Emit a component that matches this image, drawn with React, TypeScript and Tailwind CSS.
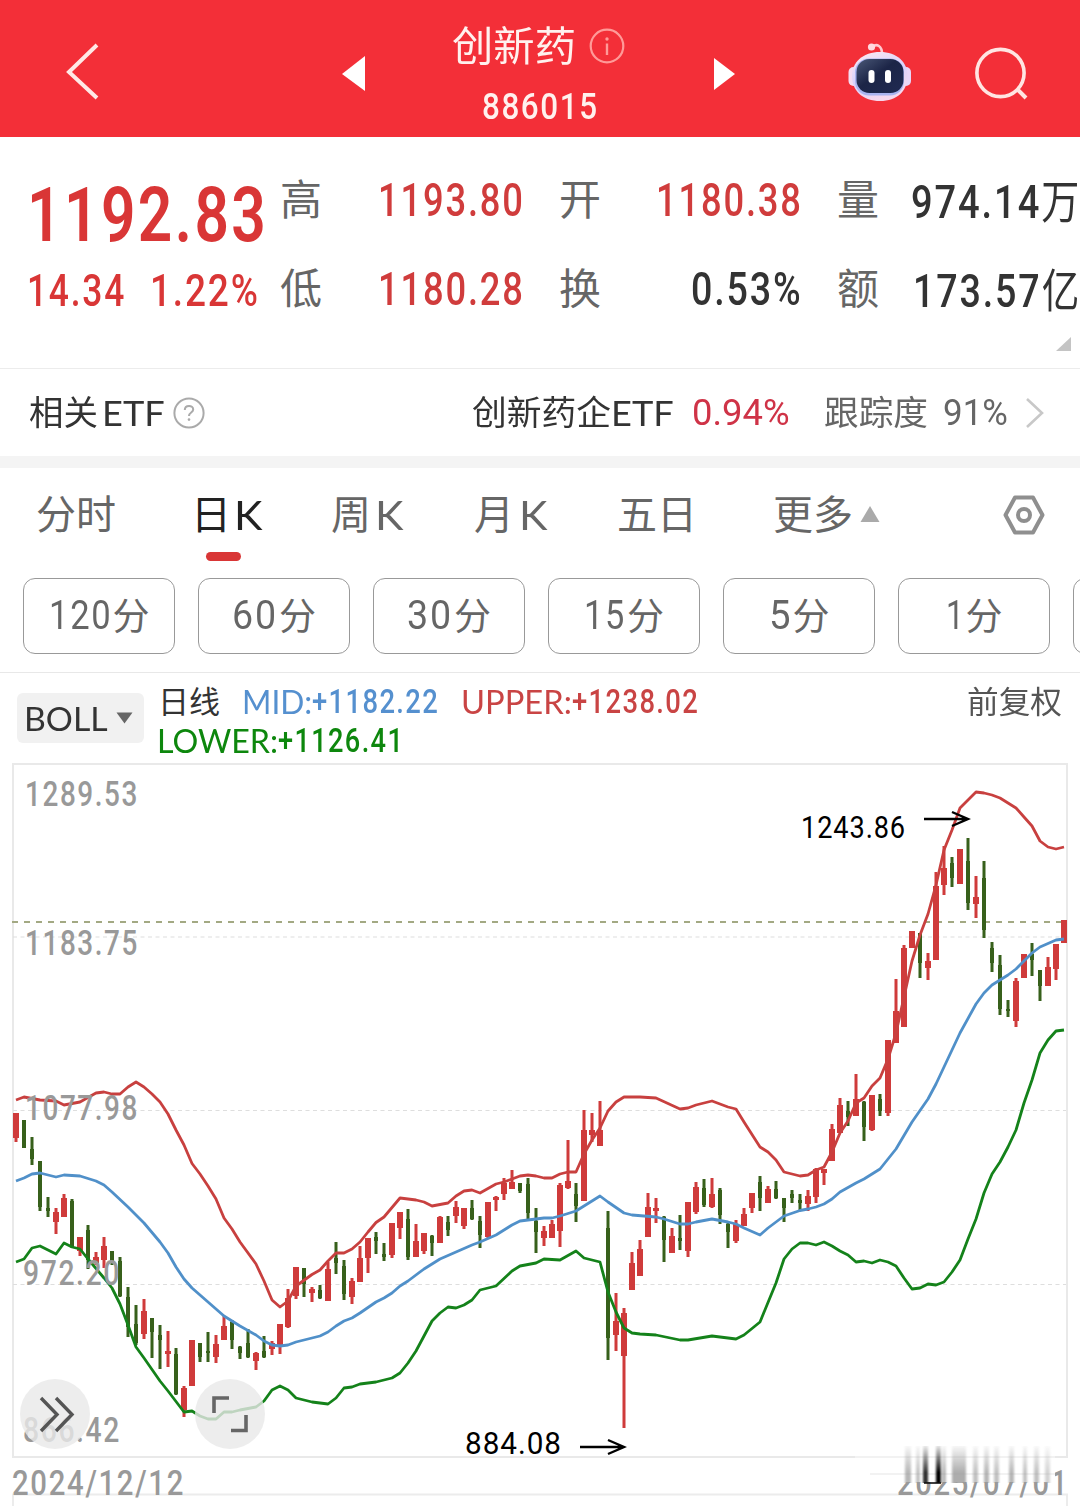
import { useLayoutEffect, useRef, useState, type ReactNode } from "react";
import { clsx } from "clsx";

const UP = "#cf3b3b";
const DOWN = "#37601b";

// dir (1 = up, 0 = down), high, low, body top, body bottom
type Candle = [number, number, number, number, number];

const CANDLE_STEP = 8;
const CANDLE_START = 16;

const CANDLES: Candle[] = [
  [1, 1113, 1142, 1113, 1138], [0, 1120, 1148, 1120, 1148], [0, 1137, 1165, 1149, 1159],
  [0, 1161, 1211, 1161, 1207], [0, 1197, 1217, 1208, 1211], [1, 1208, 1234, 1212, 1222],
  [1, 1194, 1217, 1198, 1217], [0, 1199, 1248, 1201, 1247], [1, 1237, 1256, 1237, 1251],
  [0, 1225, 1269, 1230, 1260], [1, 1252, 1265, 1257, 1263], [1, 1237, 1268, 1246, 1260],
  [0, 1251, 1265, 1251, 1262], [0, 1257, 1297, 1261, 1296], [0, 1287, 1337, 1297, 1327],
  [0, 1305, 1345, 1324, 1343], [1, 1299, 1339, 1311, 1334], [0, 1318, 1358, 1318, 1332],
  [0, 1325, 1369, 1335, 1340], [1, 1331, 1367, 1351, 1354], [0, 1348, 1395, 1354, 1394],
  [1, 1386, 1417, 1388, 1410], [1, 1340, 1386, 1340, 1386], [0, 1343, 1362, 1343, 1357],
  [0, 1332, 1362, 1351, 1353], [1, 1335, 1363, 1344, 1357], [1, 1316, 1340, 1326, 1340],
  [0, 1320, 1349, 1322, 1340], [0, 1346, 1359, 1347, 1353], [0, 1329, 1358, 1343, 1357],
  [1, 1352, 1370, 1353, 1361], [0, 1336, 1358, 1351, 1357], [1, 1341, 1355, 1343, 1349],
  [1, 1324, 1354, 1324, 1345], [1, 1289, 1328, 1298, 1327], [1, 1267, 1299, 1267, 1296],
  [0, 1268, 1297, 1268, 1284], [1, 1287, 1302, 1289, 1293], [0, 1285, 1299, 1290, 1298],
  [1, 1262, 1301, 1269, 1301], [0, 1242, 1274, 1258, 1263], [0, 1260, 1300, 1266, 1294],
  [1, 1278, 1304, 1281, 1297], [1, 1246, 1282, 1258, 1282], [1, 1238, 1273, 1238, 1258],
  [0, 1232, 1254, 1237, 1241], [0, 1243, 1261, 1254, 1257], [1, 1223, 1258, 1223, 1255],
  [1, 1212, 1239, 1212, 1228], [0, 1209, 1260, 1219, 1257], [1, 1224, 1257, 1241, 1257],
  [1, 1233, 1254, 1233, 1251], [0, 1235, 1256, 1236, 1243], [1, 1216, 1243, 1217, 1243],
  [0, 1216, 1236, 1222, 1230], [1, 1201, 1223, 1207, 1216], [1, 1208, 1229, 1208, 1226],
  [0, 1200, 1220, 1208, 1219], [0, 1216, 1248, 1221, 1235], [1, 1202, 1238, 1202, 1237],
  [1, 1196, 1211, 1197, 1200], [1, 1178, 1200, 1183, 1194], [1, 1170, 1189, 1182, 1189],
  [0, 1183, 1193, 1183, 1191], [0, 1178, 1219, 1184, 1213], [0, 1208, 1253, 1221, 1232],
  [1, 1226, 1246, 1231, 1238], [1, 1220, 1238, 1224, 1238], [1, 1183, 1247, 1185, 1231],
  [1, 1140, 1189, 1181, 1188], [0, 1183, 1222, 1194, 1206], [1, 1110, 1201, 1130, 1201],
  [1, 1113, 1142, 1130, 1135], [1, 1101, 1146, 1130, 1146], [0, 1211, 1360, 1228, 1338],
  [1, 1293, 1351, 1321, 1335], [1, 1308, 1428, 1313, 1356], [1, 1252, 1290, 1263, 1290],
  [1, 1240, 1276, 1249, 1276], [1, 1193, 1237, 1207, 1237], [1, 1198, 1223, 1208, 1211],
  [0, 1216, 1262, 1217, 1240], [1, 1228, 1253, 1236, 1253], [0, 1215, 1250, 1238, 1241],
  [1, 1202, 1257, 1202, 1251], [1, 1182, 1214, 1187, 1212], [0, 1179, 1207, 1188, 1205],
  [1, 1178, 1208, 1194, 1207], [0, 1188, 1224, 1190, 1215], [0, 1223, 1248, 1224, 1232],
  [1, 1220, 1243, 1224, 1241], [1, 1208, 1226, 1214, 1226], [1, 1193, 1213, 1193, 1208],
  [0, 1176, 1211, 1182, 1198], [1, 1186, 1203, 1189, 1203], [0, 1181, 1199, 1189, 1198],
  [0, 1198, 1222, 1198, 1208], [0, 1190, 1203, 1194, 1198], [0, 1194, 1211, 1200, 1203],
  [1, 1190, 1211, 1196, 1204], [1, 1168, 1203, 1169, 1197], [1, 1169, 1185, 1169, 1173],
  [1, 1124, 1161, 1129, 1161], [1, 1098, 1133, 1105, 1133], [0, 1101, 1126, 1111, 1117],
  [1, 1074, 1116, 1099, 1116], [0, 1101, 1141, 1102, 1127], [1, 1095, 1131, 1095, 1130],
  [0, 1094, 1116, 1099, 1111], [1, 1040, 1116, 1040, 1113], [1, 979, 1043, 1011, 1043],
  [1, 945, 1027, 948, 1027], [1, 931, 948, 931, 948], [0, 933, 978, 933, 963],
  [1, 953, 980, 961, 968], [1, 872, 960, 886, 960], [1, 846, 895, 868, 885],
  [0, 857, 887, 863, 878], [1, 849, 884, 849, 884], [0, 838, 910, 861, 903],
  [1, 876, 918, 897, 904], [0, 861, 938, 878, 930], [0, 942, 972, 948, 963],
  [0, 955, 1015, 965, 1009], [0, 1000, 1017, 1009, 1011], [1, 978, 1027, 981, 1021],
  [1, 954, 978, 954, 978], [0, 943, 976, 954, 960], [0, 970, 1001, 970, 986],
  [1, 957, 986, 967, 986], [1, 944, 980, 944, 969], [1, 920, 943, 920, 943],
];

const UPPER =
  "16,1100 24,1097 40,1100 56,1101 64,1105 80,1102 96,1093 104,1092 112,1094 120,1094 128,1087 136,1082 144,1087 152,1094 160,1102 168,1114 176,1130 184,1145 192,1163.5 200,1174 208,1186 216,1199 224,1218 232,1229 240,1242 256,1264 264,1281 272,1300 280,1307 288,1301 296,1286 312,1274.5 320,1270 328,1261 336,1253 344,1253 352,1249 360,1242 368,1232 376,1222.5 384,1217 400,1198 416,1200 424,1202 432,1206 448,1203 456,1196 464,1191 472,1190 480,1193 496,1184 504,1182 512,1179 520,1176 528,1175 536,1176 544,1178 552,1178 560,1174 568,1172 576,1172 584,1154 592,1140 600,1128 608,1111 616,1102 624,1097 640,1097 656,1098 680,1109 688,1108 696,1105 712,1101 728,1107 736,1109 744,1122 760,1147 768,1152 776,1160 784,1172 800,1176 808,1175 816,1170 824,1167 832,1152 840,1133 848,1121 856,1103 864,1098 872,1086 880,1078 888,1059 896,1033 904,997 912,961 920,935 928,914 936,885 944,850 952,830 960,808 976,792 984,793 992,795 1000,798 1008,803 1016,808 1024,817 1032,826 1040,841 1048,847 1056,849 1064,847";

const MID =
  "16,1181 24,1178 32,1174 40,1173 56,1177 64,1175 80,1176 96,1181 104,1185 112,1192 128,1207 144,1223 160,1242 168,1253 176,1267 184,1279 192,1288 208,1302 224,1316 240,1326 256,1335 264,1341 272,1345 280,1346 288,1345 296,1342 312,1338 320,1336 328,1332 336,1326 344,1321 352,1318 360,1313 376,1302 384,1298 392,1293 400,1286 408,1281 424,1269 440,1259 456,1252 472,1245 480,1242 496,1235 504,1230 512,1225 520,1221 528,1220 544,1218 552,1218 560,1216 576,1211 584,1206 600,1196 608,1202 624,1213 632,1215 656,1217 664,1219 680,1224 688,1224 696,1222 712,1219 728,1222 736,1224 744,1228 760,1235 768,1228 784,1216 800,1210.5 808,1209 816,1207 824,1204 832,1199 840,1192 856,1183 864,1179 880,1169 896,1149 912,1122 928,1099 936,1084 952,1050 960,1033 976,1004 984,993 992,985 1000,980 1008,975 1016,969 1032,953 1040,947 1056,940 1064,939";

const LOWER =
  "16,1262 24,1259 32,1248 40,1246 56,1254 64,1243 72,1247 80,1249 88,1259 104,1278 112,1288 120,1304 128,1325 136,1347 144,1358 160,1381 168,1391 184,1412 192,1411 200,1416 208,1419 216,1419 224,1412 232,1412 240,1410 256,1407 264,1401 272,1390 280,1386 288,1390 296,1398 312,1402 320,1403 328,1404 336,1398 344,1388 352,1387 360,1384 376,1382 392,1378 400,1373 408,1363 416,1351 432,1321 440,1313 448,1307 456,1308 464,1305 472,1300 480,1290 496,1286 512,1271 520,1266 536,1263 544,1259 560,1260 576,1251 584,1258 600,1262 608,1292 616,1312 624,1328 632,1333 640,1334 656,1335 680,1340 688,1340 712,1336 736,1339 744,1335 760,1322 776,1283 784,1259 792,1249 800,1243 808,1243 816,1245 824,1242 832,1246 840,1251 848,1255 856,1262 864,1261 872,1263 880,1260 888,1262 896,1266 904,1278 912,1289 920,1288 928,1284 936,1285 944,1282 952,1272 960,1260 968,1239 976,1219 984,1193 992,1174 1000,1162 1008,1147 1016,1130 1024,1103 1032,1080 1040,1053 1048,1040 1056,1031 1064,1030";

const Y_LABELS = [
  { text: "1289.53", x: 25, y: 805.5, w: 114 },
  { text: "1183.75", x: 25, y: 954.5, w: 114 },
  { text: "1077.98", x: 25, y: 1119.5, w: 114 },
  { text: "972.20", x: 23, y: 1285, w: 98 },
  { text: "866.42", x: 23, y: 1442, w: 98 },
];

const NUM = "font-[Roboto,sans-serif] font-medium tracking-[0.05em]";
const CJK = "font-['Noto_Sans_CJK_SC',sans-serif]";
const LATIN = "font-[Lato,sans-serif]";

// squeezes a run of text horizontally so it fills exactly `w` pixels
function Fit({ w, className, children }: { w: number; className?: string; children: ReactNode }) {
  const ref = useRef<HTMLSpanElement>(null);
  const [scale, setScale] = useState(1);

  useLayoutEffect(() => {
    if (ref.current) setScale(w / ref.current.offsetWidth);
  }, [w]);

  return (
    <span className={clsx("block shrink-0 leading-none", className)} style={{ width: w }}>
      <span
        ref={ref}
        className="inline-block origin-left whitespace-nowrap align-top"
        style={{ transform: `scaleX(${scale})` }}
      >
        {children}
      </span>
    </span>
  );
}

function RobotIcon() {
  return (
    <svg width="64" height="62" viewBox="0 0 64 62" className="ml-[112px] shrink-0">
      <defs>
        <linearGradient id="shell" x1="0" y1="0" x2="0.4" y2="1">
          <stop offset="0" stopColor="#ffe9f0" />
          <stop offset="0.55" stopColor="#d9d2fb" />
          <stop offset="1" stopColor="#f6d8ee" />
        </linearGradient>
        <linearGradient id="visor" x1="0" y1="0" x2="1" y2="1">
          <stop offset="0" stopColor="#4a5877" />
          <stop offset="0.45" stopColor="#1c2547" />
          <stop offset="1" stopColor="#202a52" />
        </linearGradient>
      </defs>
      <path d="M24 6 C29 2 34 5 34 13" fill="none" stroke="#ffc9cf" strokeWidth="2.6" />
      <circle cx="23.5" cy="6" r="3.6" fill="#ffd9de" />
      <rect x="0.5" y="26" width="10" height="19" rx="5" fill="#f5dcf0" />
      <rect x="53" y="26" width="10" height="19" rx="5" fill="#e9d6f8" />
      <path
        d="M32 11 C49 11 59.5 21 59.5 35 C59.5 50 49 60 32 60 C15 60 4 50 4 35 C4 21 15 11 32 11 Z"
        fill="url(#shell)"
      />
      <rect x="7" y="17.5" width="49" height="37" rx="14" fill="#a9b4f0" />
      <rect x="8.5" y="18" width="47" height="34" rx="13" fill="url(#visor)" />
      <rect x="20.5" y="29" width="6" height="13" rx="3" fill="#fff" />
      <rect x="37" y="29" width="6" height="13" rx="3" fill="#fff" />
    </svg>
  );
}

function Header() {
  return (
    <header className="flex h-[137px] items-start bg-[#f32f38]">
      <svg width="34" height="60" viewBox="0 0 34 60" className="mt-[42px] ml-[66px] shrink-0">
        <path d="M31 3 L3 30 L31 56" fill="none" stroke="#ffe9e6" strokeWidth="4" />
      </svg>
      <svg width="24" height="36" viewBox="0 0 24 36" className="mt-[56px] ml-[242px] shrink-0">
        <path d="M0 18 L23 0 V35 Z" fill="#fff" />
      </svg>
      <div className="ml-[86px] flex w-[173px] flex-col pt-[24px]">
        <div className="flex h-[44px] items-center">
          <Fit w={124} className={clsx(CJK, "mb-1.5 text-[41px] text-[#fff1ee]")}>创新药</Fit>
          <svg width="36" height="36" viewBox="0 0 36 36" className="ml-[13px]">
            <circle cx="18" cy="18" r="16.3" fill="none" stroke="#ff9a98" strokeWidth="2.2" />
            <path d="M18 15.5 V27" stroke="#ff9a98" strokeWidth="2.4" />
            <circle cx="18" cy="11" r="1.7" fill="#ff9a98" />
          </svg>
        </div>
        <div className="mt-[21px] ml-[30px]">
          <Fit w={117} className={clsx(NUM, "text-[36px] text-[#fff1ee]")}>886015</Fit>
        </div>
      </div>
      <svg width="22" height="34" viewBox="0 0 22 34" className="mt-[58px] ml-[89px] shrink-0">
        <path d="M21 16 L0 0 V32 Z" fill="#fff" />
      </svg>
      <div className="mt-[41px] flex shrink-0">
        <RobotIcon />
        <svg width="56" height="56" viewBox="0 0 56 56" className="mt-[5px] ml-[61px]">
          <circle cx="27.5" cy="27" r="23.6" fill="none" stroke="#ffe5e2" strokeWidth="3.6" />
          <path d="M44 43 L53 52" stroke="#ffe5e2" strokeWidth="4" />
        </svg>
      </div>
    </header>
  );
}

function Stat({ label, w, tone, children }: { label: string; w: number; tone: string; children: ReactNode }) {
  return (
    <div className="flex h-[89px] items-center justify-between">
      <span className={clsx(CJK, "mb-2 text-[42px] leading-none text-[#666]")}>{label}</span>
      <Fit w={w} className={clsx(NUM, "mb-0.5 text-[46px]", tone)}>{children}</Fit>
    </div>
  );
}

function Quote() {
  return (
    <section className="flex h-[232px] border-b border-[#ececec]">
      <div className="w-[280px] shrink-0 pt-[40px] pl-[27px] text-[#d93636]">
        <Fit w={241} className="font-[Roboto,sans-serif] text-[76px] font-semibold tracking-[0.04em]">1192.83</Fit>
        <div className="mt-[15px] flex">
          <Fit w={99} className={clsx(NUM, "text-[45px]")}>14.34</Fit>
          <Fit w={110} className={clsx(NUM, "ml-[24px] text-[45px]")}>1.22%</Fit>
        </div>
      </div>
      <div className="w-[245px] shrink-0 pt-[19px]">
        <Stat label="高" w={147} tone="text-[#d03c3c]">1193.80</Stat>
        <Stat label="低" w={147} tone="text-[#d03c3c]">1180.28</Stat>
      </div>
      <div className="ml-[34px] w-[244px] shrink-0 pt-[19px]">
        <Stat label="开" w={147} tone="text-[#d03c3c]">1180.38</Stat>
        <Stat label="换" w={112} tone="text-[#333]">0.53%</Stat>
      </div>
      <div className="ml-[34px] w-[242px] shrink-0 pt-[19px]">
        <Stat label="量" w={168} tone="text-[#333]">
          974.14<span className={clsx(CJK, "text-[46px] leading-none font-normal tracking-normal")}>万</span>
        </Stat>
        <Stat label="额" w={166} tone="text-[#333]">
          173.57<span className={clsx(CJK, "text-[46px] leading-none font-normal tracking-normal")}>亿</span>
        </Stat>
        <svg width="16" height="16" viewBox="0 0 16 16" className="mt-0.5 ml-[219px]">
          <path d="M15 1 V15 H0 Z" fill="#c4c4c4" />
        </svg>
      </div>
    </section>
  );
}

function EtfRow() {
  return (
    <section className={clsx(CJK, "flex h-[87px] items-center pl-[29px] text-[34px] text-[#333]")}>
      <Fit w={69} className="mb-[3px]">相关</Fit>
      <Fit w={63} className={clsx(LATIN, "ml-[4px] text-[35px]")}>ETF</Fit>
      <svg width="32" height="32" viewBox="0 0 32 32" className="ml-[8px]">
        <circle cx="16" cy="16" r="14.6" fill="none" stroke="#aaa" strokeWidth="2" />
        <path d="M11.8 13 C11.8 7.6 20.2 7.6 20.2 12.6 C20.2 15.6 16 15.6 16 19" fill="none" stroke="#aaa" strokeWidth="2" />
        <circle cx="16" cy="22.6" r="1.3" fill="#aaa" />
      </svg>
      <Fit w={139} className="mb-[3px] ml-[267px]">创新药企</Fit>
      <Fit w={63} className={clsx(LATIN, "text-[35px]")}>ETF</Fit>
      <Fit w={98} className="ml-[18px] font-[Roboto,sans-serif] text-[36px] text-[#cf3347]">0.94%</Fit>
      <Fit w={104} className="mb-[3px] ml-[34px] text-[#666]">跟踪度</Fit>
      <Fit w={65} className="ml-[15px] font-[Roboto,sans-serif] text-[36px] text-[#666]">91%</Fit>
      <svg width="20" height="34" viewBox="0 0 20 34" className="ml-[17px]">
        <path d="M2 3 L17 17 L2 31" fill="none" stroke="#c8c8c8" strokeWidth="2.6" />
      </svg>
    </section>
  );
}

function Tabs() {
  return (
    <nav className={clsx(CJK, "flex h-[110px] items-start pt-[24px] pl-[36px] text-[40px] text-[#666]")}>
      <Fit w={80}>分时</Fit>
      <div className="ml-[75px] flex w-[71px] flex-col items-start">
        <div className="flex text-[#222]">
          <Fit w={40}>日</Fit>
          <Fit w={29} className={clsx(LATIN, "mt-[3px] ml-[3px]")}>K</Fit>
        </div>
        <span className="mt-[17px] ml-[15px] h-[9px] w-[35px] rounded-full bg-[#d93636]" />
      </div>
      <Fit w={40} className="ml-[69px]">周</Fit>
      <Fit w={29} className={clsx(LATIN, "mt-[3px] ml-[4px]")}>K</Fit>
      <Fit w={40} className="ml-[70px]">月</Fit>
      <Fit w={29} className={clsx(LATIN, "mt-[3px] ml-[5px]")}>K</Fit>
      <Fit w={80} className="ml-[69px]">五日</Fit>
      <Fit w={80} className="ml-[76px]">更多</Fit>
      <svg width="20" height="18" viewBox="0 0 20 18" className="mt-[13px] ml-[7px] shrink-0">
        <path d="M10 1 L19.5 17 H0.5 Z" fill="#aaa" />
      </svg>
      <svg width="44" height="42" viewBox="0 0 44 42" className="mt-[2px] ml-[122px] shrink-0">
        <path
          d="M13 3.5 H31 L40.5 21 L31 38.5 H13 L3.5 21 Z"
          fill="none"
          stroke="#8f8f8f"
          strokeWidth="4"
          strokeLinejoin="round"
        />
        <circle cx="22" cy="21" r="6" fill="none" stroke="#8f8f8f" strokeWidth="4" />
      </svg>
    </nav>
  );
}

const PERIODS = [
  { n: "120", w: 63 },
  { n: "60", w: 46 },
  { n: "30", w: 46 },
  { n: "15", w: 42 },
  { n: "5", w: 23 },
  { n: "1", w: 19 },
];

function Periods() {
  return (
    <div className="flex h-[95px] gap-[23px] overflow-hidden border-b border-[#e8e8e8] pl-[23px] text-[#666]">
      {PERIODS.map((p) => (
        <button
          key={p.n}
          type="button"
          className="flex h-[76px] w-[152px] shrink-0 items-center justify-center gap-px rounded-xl border border-[#999]"
        >
          <Fit w={p.w} className="font-[Roboto,sans-serif] text-[40px] tracking-[0.05em]">{p.n}</Fit>
          <span className={clsx(CJK, "mb-1 text-[37px] leading-none")}>分</span>
        </button>
      ))}
      <span className="h-[76px] w-[152px] shrink-0 rounded-xl border border-[#999]" />
    </div>
  );
}

function Legend() {
  return (
    <div className={clsx(CJK, "flex h-[83px] items-start pl-[17px] text-[31px]")}>
      <div className="mt-[20px] flex h-[50px] w-[127px] shrink-0 items-center rounded-md bg-[#f1f1f1] pl-[7px] text-[#333]">
        <Fit w={84} className={clsx(LATIN, "text-[33px]")}>BOLL</Fit>
        <svg width="17" height="12" viewBox="0 0 17 12" className="ml-[8px]">
          <path d="M0.5 0.5 H16.5 L8.5 11.5 Z" fill="#666" />
        </svg>
      </div>
      <div className="ml-[14px] flex w-[809px] shrink-0 flex-col pt-[9px]">
        <div className="flex h-[39px] items-center">
          <Fit w={62} className="mb-1 text-[#333]">日线</Fit>
          <Fit w={70} className={clsx(LATIN, "ml-[22px] text-[33px] text-[#5590cf]")}>MID:</Fit>
          <Fit w={127} className={clsx(NUM, "text-[33px] text-[#5590cf]")}>+1182.22</Fit>
          <Fit w={111} className={clsx(LATIN, "ml-[22px] text-[33px] text-[#c94444]")}>UPPER:</Fit>
          <Fit w={127} className={clsx(NUM, "text-[33px] text-[#c94444]")}>+1238.02</Fit>
        </div>
        <div className="flex h-[39px] items-center">
          <Fit w={121} className={clsx(LATIN, "-ml-px text-[33px] text-[#0d870d]")}>LOWER:</Fit>
          <Fit w={126} className={clsx(NUM, "text-[33px] text-[#0d870d]")}>+1126.41</Fit>
        </div>
      </div>
      <Fit w={95} className="mt-[11px] text-[#555]">前复权</Fit>
    </div>
  );
}

function Arrow({ x, y, len }: { x: number; y: number; len: number }) {
  return (
    <path
      d={`M${x} ${y} h${len} m-16 -7 l16 7 l-16 7`}
      fill="none"
      stroke="#000"
      strokeWidth="2.4"
    />
  );
}

// vertical ghosting over the right end of the date axis: x, width, opacity, colour
const STREAKS: [number, number, number, string][] = [
  [905, 6, 0.7, "#999"], [916, 4, 0.6, "#999"], [923, 5, 1, "#333"], [936, 5, 1, "#000"],
  [942, 4, 0.6, "#888"], [952, 14, 0.8, "#999"], [973, 5, 0.6, "#999"], [984, 5, 0.7, "#999"],
  [994, 5, 0.6, "#999"], [1009, 5, 0.7, "#999"], [1023, 4, 0.6, "#999"], [1034, 5, 0.6, "#999"],
  [1045, 5, 0.5, "#aaa"],
];

function Chart() {
  return (
    <svg width="1080" height="750" viewBox="0 756 1080 750" className="block">
      <defs>
        <linearGradient id="fade" x1="0" y1="0" x2="0" y2="1">
          <stop offset="0" stopColor="#fff" stopOpacity="0.1" />
          <stop offset="0.7" stopColor="#fff" />
        </linearGradient>
        <mask id="fadeMask" maskUnits="userSpaceOnUse" x="850" y="1446" width="220" height="38">
          <rect x="850" y="1446" width="220" height="38" fill="url(#fade)" />
        </mask>
        <filter id="soft" x="-10%" y="-10%" width="120%" height="120%">
          <feGaussianBlur stdDeviation="1.2 0.2" />
        </filter>
      </defs>

      <rect x="13" y="764" width="1054" height="693" fill="none" stroke="#e9e9e9" strokeWidth="2" />
      <path d="M13 1506 V1494.5 H1067 V1506" fill="none" stroke="#ececec" strokeWidth="2" />
      {[937, 1110.5, 1284.5].map((y) => (
        <path key={y} d={`M13 ${y} H1066`} stroke="#dedede" strokeWidth="1.2" strokeDasharray="4 3.5" />
      ))}
      <path d="M12 922 H1066" stroke="#a3a983" strokeWidth="2" strokeDasharray="6 6" />

      {CANDLES.map(([up, high, low, top, bottom], i) => {
        const x = CANDLE_START + i * CANDLE_STEP;
        const w = up ? 6 : 4;
        return (
          <g key={x} fill={up ? UP : DOWN}>
            <rect x={x - 1.5} y={high} width={3} height={low - high} />
            <rect x={x - w / 2} y={top} width={w} height={bottom - top} />
          </g>
        );
      })}

      <g fill="none" strokeWidth="2.8" strokeLinejoin="round">
        <polyline points={UPPER} stroke="#c8403f" />
        <polyline points={MID} stroke="#5090c9" />
        <polyline points={LOWER} stroke="#14821a" />
      </g>

      <g fill="#999" fontFamily="Roboto, sans-serif" fontWeight="500" fontSize="35" letterSpacing="2">
        {Y_LABELS.map((l) => (
          <text key={l.text} x={l.x} y={l.y} textLength={l.w} lengthAdjust="spacingAndGlyphs">
            {l.text}
          </text>
        ))}
        <text x="12" y="1494.5" textLength="173" lengthAdjust="spacingAndGlyphs">2024/12/12</text>
        <text x="897" y="1494.5" textLength="172" lengthAdjust="spacingAndGlyphs">2025/07/01</text>
      </g>

      <g fill="#000" fontFamily="Roboto, sans-serif" fontSize="30.5" letterSpacing="1">
        <text x="801" y="838" textLength="105" lengthAdjust="spacingAndGlyphs">1243.86</text>
        <text x="465" y="1454" textLength="97" lengthAdjust="spacingAndGlyphs">884.08</text>
      </g>
      <Arrow x={924} y={819} len={44} />
      <Arrow x={580} y={1447} len={44} />

      <rect x="855" y="1448" width="200" height="34" fill="#fff" />
      <path d="M855 1457 H1055 M870 1474 H1055" stroke="#eee" strokeWidth="1.5" />
      <g mask="url(#fadeMask)" filter="url(#soft)">
        {STREAKS.map(([x, w, o, c]) => (
          <rect key={x} x={x} y="1446" width={w} height="37" fill={c} opacity={o} />
        ))}
      </g>
      <path d="M924 1483 H941" stroke="#111" strokeWidth="1.6" />

      <circle cx="55" cy="1414" r="35" fill="#e9e9e9" fillOpacity="0.8" />
      <path d="M41 1398 L57 1414.5 L41 1431 M56 1398 L72 1414.5 L56 1431" fill="none" stroke="#555" strokeWidth="3.4" />
      <circle cx="230" cy="1414" r="35" fill="#e9e9e9" fillOpacity="0.8" />
      <path d="M214 1413 V1398 H229 M246 1415 V1430.5 H231" fill="none" stroke="#666" strokeWidth="3.6" />
    </svg>
  );
}

export default function App() {
  return (
    <main className="h-[1506px] w-[1080px] overflow-hidden bg-white">
      <Header />
      <Quote />
      <EtfRow />
      <div className="h-[12px] bg-[#f4f4f4]" />
      <Tabs />
      <Periods />
      <Legend />
      <Chart />
    </main>
  );
}
